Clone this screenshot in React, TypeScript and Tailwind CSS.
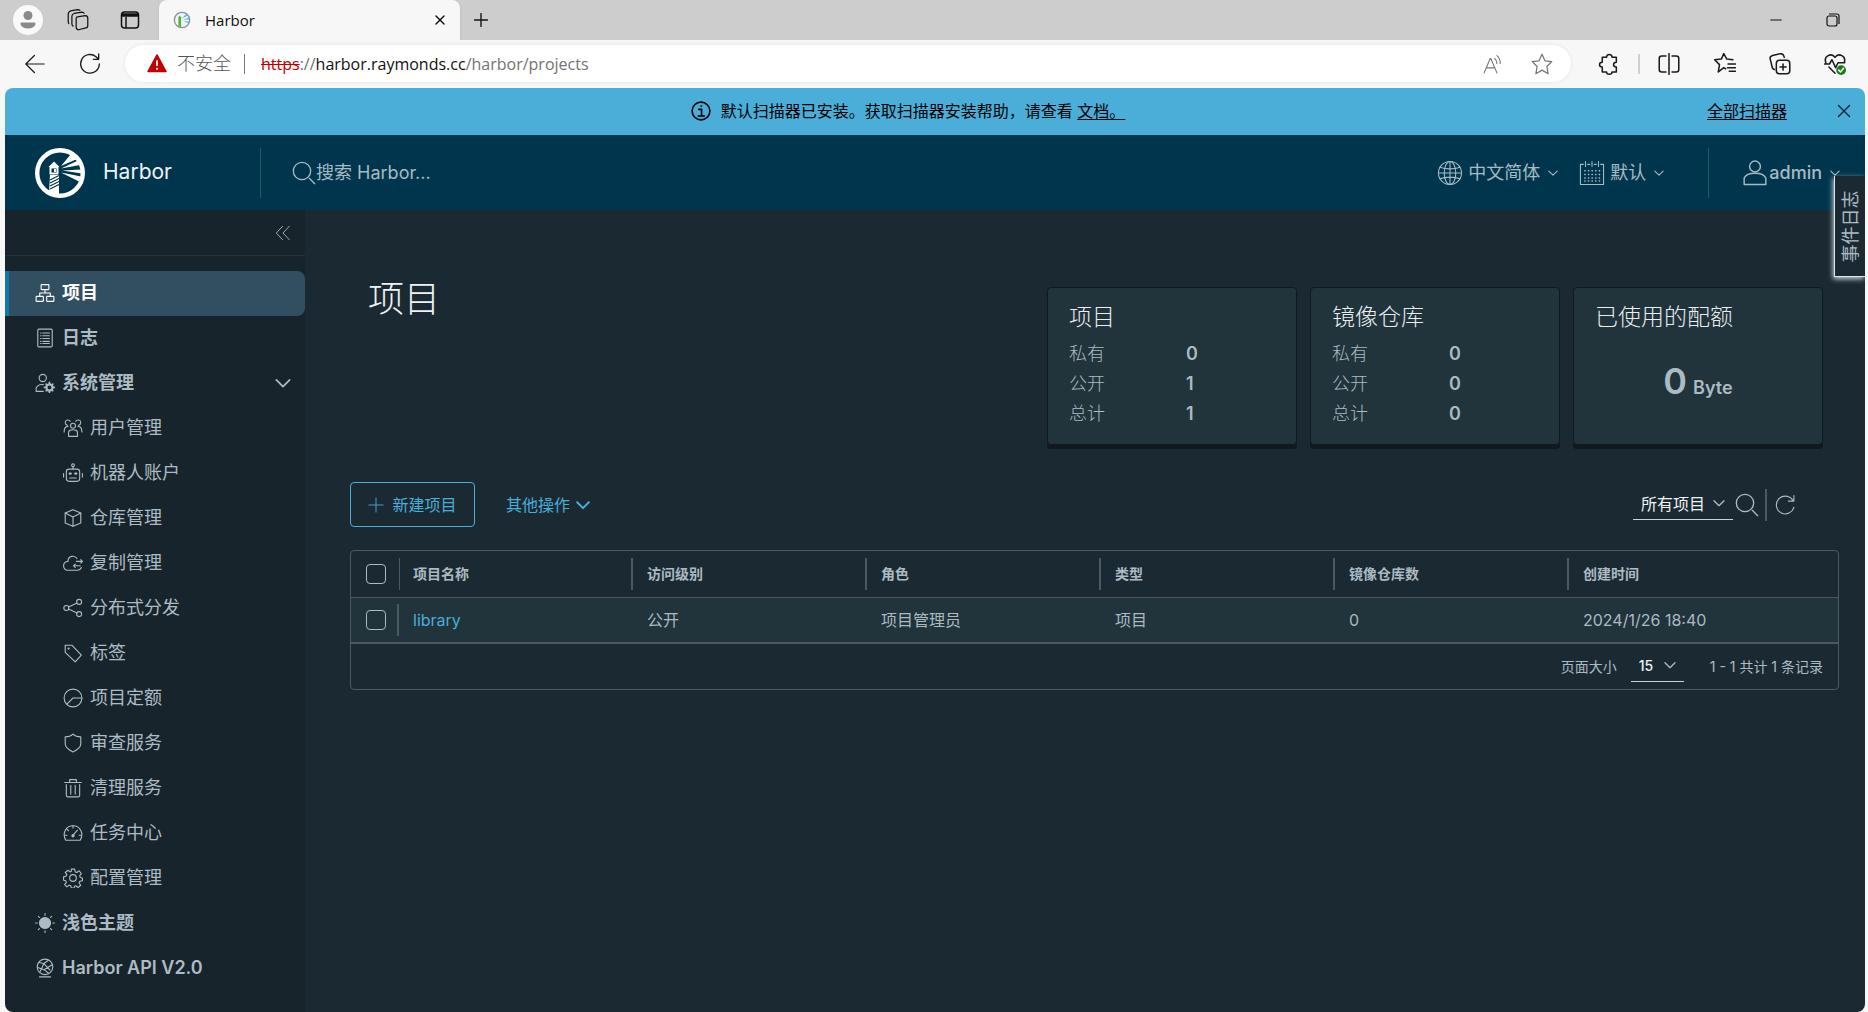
import { useState, type ReactNode } from "react";
import { Minus, Plus, X } from "lucide-react";

const cjk = "font-[Inter,'Noto_Sans_CJK_SC',sans-serif]";

function Icon({
  children,
  className = "size-5",
  width = 2,
}: {
  children: ReactNode;
  className?: string;
  width?: number;
}) {
  return (
    <svg
      viewBox="0 0 36 36"
      className={`shrink-0 ${className}`}
      fill="none"
      stroke="currentColor"
      strokeWidth={width}
      strokeLinecap="round"
      strokeLinejoin="round"
      aria-hidden="true"
    >
      {children}
    </svg>
  );
}

function Chevron({ className = "size-[14px]", width = 3 }: { className?: string; width?: number }) {
  return (
    <Icon className={className} width={width}>
      <path d="M3 11l15 15 15-15" />
    </Icon>
  );
}

function SearchIcon({ className = "size-6" }: { className?: string }) {
  return (
    <Icon className={className} width={2}>
      <circle cx="15" cy="15" r="13" />
      <path d="M26 26l8 8" />
    </Icon>
  );
}

const icons: Record<string, ReactNode> = {
  projects: (
    <>
      <rect x="11" y="3" width="14" height="9" rx="1" />
      <rect x="2" y="24" width="13" height="9" rx="1" />
      <rect x="21" y="24" width="13" height="9" rx="1" />
      <path d="M18 12v6M8.500 24v-6h19v6" />
    </>
  ),
  logs: (
    <>
      <rect x="5" y="2" width="26" height="32" rx="2" />
      <path d="M14 9h12M14 14h12M14 19h12M14 24h12M14 28h12M10 9h1M10 14h1M10 19h1M10 24h1M10 28h1" />
    </>
  ),
  admin: (
    <>
      <circle cx="14" cy="9" r="6.500" />
      <path d="M15 33H2v-6c3-5 8-7 13-6" />
      <circle cx="26" cy="26" r="5.500" strokeWidth="4" />
      <path d="M26 17v3M26 32v3M17 26h3M32 26h3M20 20l2 2M30 30l2 2M32 20l-2 2M22 30l-2 2" strokeWidth="3" />
    </>
  ),
  users: (
    <>
      <circle cx="18" cy="14" r="4.500" />
      <path d="M10 33v-8c2-5 14-5 16 0v8z" />
      <path d="M13 6c-2-4-9-3-9 2 0 2 1 4 4 5M23 6c2-4 9-3 9 2 0 2-1 4-4 5M9 15c-4 0-7 3-7 10M27 15c4 0 7 3 7 10" />
    </>
  ),
  robot: (
    <>
      <rect x="6" y="11" width="24" height="22" rx="5" />
      <circle cx="18" cy="4" r="2.500" />
      <path d="M18 7v4M1 19v6M35 19v6M12 27h12" />
      <path d="M12 19h2M22 19h2" strokeWidth="4" />
    </>
  ),
  box: (
    <>
      <path d="M18 3l14 6v18l-14 6-14-6V9z" />
      <path d="M4 9l14 7 14-7M18 16v17" />
    </>
  ),
  cloud: (
    <>
      <path d="M25 10C21 3 9 5 9 15c-5 0-8 4-8 8s3 8 7 8h18c4 0 6-2 7-5" />
      <path d="M24 15h11M32 12l3 3-3 3M31 23H19M22 20l-3 3 3 3" />
    </>
  ),
  share: (
    <>
      <circle cx="6" cy="18" r="4.500" />
      <circle cx="29" cy="7" r="4.500" />
      <circle cx="29" cy="29" r="4.500" />
      <path d="M10 16l15-7M10 20l15 7" />
    </>
  ),
  tag: (
    <>
      <path d="M4 4h12l17 18-11 12L4 17z" />
      <circle cx="10" cy="10" r="1" />
    </>
  ),
  quota: (
    <>
      <circle cx="18" cy="18" r="16" />
      <path d="M7 29l11-11h16" />
    </>
  ),
  shield: <path d="M18 2c4 4 9 5 14 5v13c0 6-7 11-14 14C11 31 4 26 4 20V7c5 0 10-1 14-5z" />,
  trash: <path d="M3 8h30M12 7V3h12v4M6 12v19c0 2 1 3 3 3h18c2 0 3-1 3-3V12M14 13v16M22 13v16" />,
  gauge: (
    <>
      <path d="M5 31C-2 19 5 5 18 5s20 14 13 26z" />
      <path d="M18 22l8-9M18 5v4M3 22h4M33 22h-4M7 11l3 3" />
      <circle cx="18" cy="23" r="2" fill="currentColor" />
    </>
  ),
  gear: (
    <>
      <path d="M15 2h6l1 5 3 1 4-3 4 5-3 4 1 3 4 1v5l-5 1-1 3 3 4-5 4-4-3-2 1-1 3h-5l-1-4-3-1-4 3-4-4 3-4-1-3-4-1v-6l4-1 2-3-3-4 5-4 4 3 2-1z" />
      <circle cx="18" cy="18" r="6" />
    </>
  ),
  sun: (
    <>
      <circle cx="18" cy="18" r="10" fill="currentColor" />
      <path d="M18 1v3M18 32v3M1 18h3M32 18h3M6 6l2 2M28 28l2 2M30 6l-2 2M6 30l2-2" />
    </>
  ),
  api: (
    <>
      <circle cx="18" cy="16" r="14" />
      <path d="M8 34h20M7 8l9 2 11 12M24 4l-8 6-7 15M31 12l-15 9-11-4M16 21l8 6" />
    </>
  ),
};

const systemItems = [
  ["users", "用户管理"],
  ["robot", "机器人账户"],
  ["box", "仓库管理"],
  ["cloud", "复制管理"],
  ["share", "分布式分发"],
  ["tag", "标签"],
  ["quota", "项目定额"],
  ["shield", "审查服务"],
  ["trash", "清理服务"],
  ["gauge", "任务中心"],
  ["gear", "配置管理"],
];

const columns = ["项目名称", "访问级别", "角色", "类型", "镜像仓库数", "创建时间"];

function TabStrip() {
  return (
    <div className="flex h-10 items-stretch bg-[#cdcdcd] text-[#111]">
      <div className="flex w-[159px] items-center pl-[13px]">
        <button aria-label="Profile" className="flex size-[30px] items-center justify-center rounded-full bg-[#f9f9f9] text-[#8a8a8a]">
          <svg viewBox="0 0 20 20" className="size-5" fill="currentColor">
            <circle cx="10" cy="5.500" r="4.500" />
            <path d="M3 12.500h14c1 0 1 6-7 6s-8-6-7-6z" />
          </svg>
        </button>
        <button aria-label="Workspaces" className="ml-6">
          <Icon className="size-[22px]">
            <path d="M17 13l13-2c3 0 4 1 4 4v12c0 3-1 4-3 4l-12 3c-3 0-4-1-4-4V16c0-2 0-3 2-3z" />
            <path d="M10 28c-2-1-2-2-2-4V12c0-3 1-4 4-5l12-2c2 0 3 0 4 2" />
            <path d="M3 24c-1-1-1-2-1-4V8c0-3 1-4 4-5l11-2c2 0 3 0 4 1" />
          </Icon>
        </button>
        <button aria-label="Tab actions" className="ml-[31px]">
          <svg viewBox="0 0 20 20" className="size-5" fill="none" stroke="currentColor" strokeWidth="1.500">
            <rect x="1.500" y="2" width="17" height="16" rx="3" />
            <path d="M2 4h16v2H2z" fill="currentColor" />
            <path d="M6 7v11" />
          </svg>
        </button>
      </div>
      <div className="flex w-[301px] items-center rounded-t-lg bg-[#f7f7f7] pr-3 pl-[14px] shadow-sm">
        <svg viewBox="0 0 20 20" className="size-[18px]" aria-hidden="true">
          <circle cx="10" cy="10" r="8.500" fill="#eef4f8" stroke="#8b9499" strokeWidth="1.500" />
          <path d="M6 7l1.500-2L9 7v11l-3-1z" fill="#59ad45" />
          <path d="M10 8l5-5 2 2zM11 9.500l7-2v2zM11 11l7 1v2z" fill="#61b0e4" />
        </svg>
        <span className="ml-[14px] flex-1 font-['Open_Sans',sans-serif] text-[15px]">Harbor</span>
        <button aria-label="Close tab">
          <X className="size-4" strokeWidth={2} />
        </button>
      </div>
      <button aria-label="New tab" className="ml-[10px]">
        <Plus className="size-[22px]" strokeWidth={1.5} />
      </button>
      <div className="ml-auto flex items-center gap-10 pr-[27px]">
        <button aria-label="Minimize">
          <Minus className="size-[18px]" strokeWidth={1.5} />
        </button>
        <button aria-label="Restore">
          <svg viewBox="0 0 16 16" className="size-4" fill="none" stroke="currentColor" strokeWidth="1.200">
            <rect x="2" y="4" width="10" height="10" rx="2" />
            <path d="M4 2h8c2 0 2 1 2 2v8" />
          </svg>
        </button>
      </div>
    </div>
  );
}

function AddressBar() {
  return (
    <div className="flex h-12 items-center bg-[#f7f7f7] pb-px text-[#1b1b1b]">
      <button aria-label="Back" className="ml-6">
        <Icon className="size-[22px]">
          <path d="M33 18H3M17 4L3 18l14 14" />
        </Icon>
      </button>
      <button aria-label="Refresh" className="ml-8">
        <Icon className="size-6">
          <path d="M32 18a14 14 0 1 1-5-11l4 4M31 3v8h-8" />
        </Icon>
      </button>
      <div className="ml-[23px] flex h-[37px] flex-1 items-center rounded-full bg-white pr-[18px] pl-[21px] shadow-[0_0_4px_rgba(0,0,0,0.08)]">
        <svg viewBox="0 0 22 20" className="h-[19px] w-[22px]" aria-hidden="true">
          <path d="M11 1l9.500 17.500h-19z" fill="#c00000" stroke="#c00000" strokeWidth="1.500" strokeLinejoin="round" />
          <path d="M11 6.500v6M11 14.500v2" stroke="#fff" strokeWidth="1.800" />
        </svg>
        <span className="ml-[9px] font-['Open_Sans','Noto_Sans_CJK_SC',sans-serif] text-[18px] font-light text-[#555]">不安全</span>
        <span className="ml-[13px] h-5 w-px bg-[#777]" />
        <span className="ml-4 font-['Open_Sans',sans-serif] text-base text-[#737373]">
          <span className="text-[#c00000] line-through">https</span>://
          <span className="text-[#111]">harbor.raymonds.cc</span>/harbor/projects
        </span>
        <button aria-label="Read aloud" className="ml-auto text-[#767676]">
          <Icon className="size-5">
            <path d="M2 34L13 8h1l11 26M6 25h15M21 8c3 2 4 5 4 9M25 3c5 4 6 8 6 14" />
          </Icon>
        </button>
        <button aria-label="Favorite" className="ml-7 text-[#767676]">
          <Icon className="size-[22px]">
            <path d="M18 2l5 11 11 1-8 8 2 12-10-6-10 6 2-12-8-8 11-1z" />
          </Icon>
        </button>
      </div>
      <div className="flex items-center pr-[22px] pl-[27px]">
        <button aria-label="Extensions">
          <Icon className="size-[22px]" width={2.5}>
            <path d="M7 7h7c0-6 9-6 9 0h7v8c-6 0-6 8 0 8v8h-7c0 5-9 5-9 0H7v-8c-6 0-6-8 0-8z" />
          </Icon>
        </button>
        <span className="mx-[18px] h-5 w-[2px] bg-[#cfcfcf]" />
        <button aria-label="Split screen">
          <Icon className="size-[22px]" width={2.5}>
            <path d="M13 5H6c-3 0-4 1-4 4v18c0 3 1 4 4 4h7M23 5h7c3 0 4 1 4 4v18c0 3-1 4-4 4h-7M18 1v34" />
          </Icon>
        </button>
        <button aria-label="Favorites" className="ml-[34px]">
          <Icon className="size-[22px]" width={2.5}>
            <path d="M19 26l-3-2-9 7 2-12-8-8 11-1 4-9 5 9 10 1M23 18h12M22 24h13M25 30h10" />
          </Icon>
        </button>
        <button aria-label="Collections" className="ml-[33px]">
          <Icon className="size-[22px]" width={2.5}>
            <rect x="12" y="12" width="22" height="22" rx="5" />
            <path d="M23 18v10M18 23h10M9 27c-3-1-4-3-4-5L2 10c-1-3 1-5 4-6l13-3c3 0 5 1 6 6" />
          </Icon>
        </button>
        <button aria-label="Performance" className="ml-[33px]">
          <Icon className="size-[22px]" width={2.5}>
            <path d="M3 16C-1 5 12-1 18 7c6-8 19-2 15 9M1 18h8l4-7 6 13 4-8h11M8 23l10 10" />
            <circle cx="28" cy="28" r="8" fill="#187b1c" stroke="none" />
            <path d="M24 28l3 3 5-6" stroke="#fff" />
          </Icon>
        </button>
      </div>
    </div>
  );
}

function Banner() {
  return (
    <div className="flex h-[47px] items-center bg-[#4aaed9] pr-[10px] pb-[2px] text-base text-black">
      <div className="flex flex-1 items-center justify-center pl-[104px]">
        <Icon className="size-5" width={3}>
          <circle cx="18" cy="18" r="16" />
          <path d="M14 15h5v12M13 27h11M18 9h1" />
        </Icon>
        <span className="ml-[10px] whitespace-pre">
          默认扫描器已安装。获取扫描器安装帮助，请查看 <a href="#docs" className="underline underline-offset-2">文档。</a>
        </span>
      </div>
      <a href="#scanners" className="underline underline-offset-2">全部扫描器</a>
      <button aria-label="Close banner" className="ml-[46px] text-[#123]">
        <X className="size-[22px]" strokeWidth={1.5} />
      </button>
    </div>
  );
}

function Logo() {
  return (
    <svg viewBox="0 0 50 50" className="size-[50px] shrink-0" aria-hidden="true">
      <circle cx="25" cy="25" r="22.800" fill="none" stroke="#fff" strokeWidth="4.400" />
      <path d="M13.500 19l5.500-5.500 5.500 5.500z" fill="#fff" />
      <path d="M15.500 19.500h7v6h-7z" fill="none" stroke="#fff" strokeWidth="2" />
      <path d="M19 21h2v3h-2z" fill="#fff" />
      <path d="M15 27h9v20l-10-2z" fill="#fff" />
      <path d="M15 32l9-4.500M15 35l9-4.500M15 38l9-4.500M15 41l9-4.500" stroke="#00364d" strokeWidth="1.100" />
      <path d="M26 18L36 6l6 5zM26 20.500l16-7.500 3 4zM27 22.500l20-1v4zM26 24.500l20 4-2 5z" fill="#fff" />
    </svg>
  );
}

function Header() {
  return (
    <header className="flex h-[75px] items-center bg-[#00364d] text-[18px] text-[#a6bac4]">
      <a href="#home" className="flex w-[255px] items-center pl-[30px] text-[#eef3f5]">
        <Logo />
        <span className="ml-[18px] pb-[2px] text-[21px]">Harbor</span>
      </a>
      <div className="flex h-[50px] flex-1 items-center border-l border-[#28566a] pl-[31px]">
        <label htmlFor="search" aria-label="搜索">
          <SearchIcon />
        </label>
        <input
          id="search"
          placeholder="搜索 Harbor..."
          className="w-[300px] bg-transparent outline-none placeholder:text-[#a6bac4]"
        />
      </div>
      <button className="flex items-center">
        <Icon className="size-[26px]" width={1.5}>
          <circle cx="18" cy="18" r="16" />
          <ellipse cx="18" cy="18" rx="8" ry="16" />
          <path d="M18 2v32M2 18h32M4 10c8 3 20 3 28 0M4 26c8-3 20-3 28 0" />
        </Icon>
        <span className="ml-[5px] pb-px">中文简体</span>
        <Chevron className="ml-2 size-[10px]" width={4} />
      </button>
      <button className="ml-[21px] flex items-center">
        <Icon className="size-[26px]" width={1.5}>
          <path d="M6 6H2v28h32V6h-4M12 6h3M21 6h3M9 2v7M18 2v7M27 2v7" />
          <path d="M8 15h21M8 20h21M8 25h21M8 29h21" strokeWidth="2" strokeDasharray="0.500 4.500" />
        </Icon>
        <span className="ml-[5px] pb-px">默认</span>
        <Chevron className="ml-2 size-[10px]" width={4} />
      </button>
      <div className="ml-11 flex h-[50px] items-center border-l border-[#28566a] pr-[25px] pl-[33px]">
        <button className="flex items-center font-medium">
          <Icon className="size-[26px]" width={2}>
            <circle cx="18" cy="9" r="7.500" />
            <path d="M3 34v-9c4-9 26-9 30 0v9z" />
          </Icon>
          <span className="ml-px pb-px">admin</span>
          <Chevron className="ml-2 size-[10px]" width={4} />
        </button>
      </div>
    </header>
  );
}

function NavLink({ icon, label, active, sub }: { icon: string; label: string; active?: boolean; sub?: boolean }) {
  return (
    <a
      href={`#${icon}`}
      className={`flex h-[45px] items-center gap-[7px] border-l-4 pb-[2px] text-[18px] ${
        sub ? "pl-[54px]" : "pl-[26px] font-semibold"
      } ${active ? "rounded-r-lg border-[#0f79ad] bg-[#324f62] text-white" : "border-transparent"}`}
    >
      <Icon className="size-5">{icons[icon]}</Icon>
      <span>{label}</span>
    </a>
  );
}

function Sidebar() {
  const [open, setOpen] = useState(true);

  return (
    <aside className="w-[300px] shrink-0 bg-[#17242b] text-[#adbbc4]">
      <div className="flex h-[46px] items-center justify-end border-b border-[#22343c] pr-[14px]">
        <button aria-label="Collapse">
          <Icon className="size-4">
            <path d="M17 3L3 18l14 15M32 3L18 18l14 15" />
          </Icon>
        </button>
      </div>
      <nav className="pt-[15px]">
        <NavLink icon="projects" label="项目" active />
        <NavLink icon="logs" label="日志" />
        <button
          onClick={() => setOpen(!open)}
          aria-expanded={open}
          className="flex h-[45px] w-full items-center gap-[7px] pr-[14px] pb-[2px] pl-[30px] text-[18px] font-semibold"
        >
          <Icon className="size-5">{icons.admin}</Icon>
          <span className="flex-1 text-left">系统管理</span>
          <Chevron className="size-4" width={4} />
        </button>
        {open && systemItems.map(([icon, label]) => <NavLink key={icon} icon={icon} label={label} sub />)}
        <NavLink icon="sun" label="浅色主题" />
        <NavLink icon="api" label="Harbor API V2.0" />
      </nav>
    </aside>
  );
}

function Card({ title, children }: { title: string; children: ReactNode }) {
  return (
    <section className="h-[158px] w-[250px] rounded border border-[#0f1a20] bg-[#21333b] px-[21px] pt-[13px] shadow-[0_4px_0_#0f191e]">
      <h2 className="text-[23px] leading-8 font-light text-[#e9eef1]">{title}</h2>
      {children}
    </section>
  );
}

function Stats({ values }: { values: number[] }) {
  return (
    <dl className="mt-[6px] text-[18px] leading-[30px]">
      {["私有", "公开", "总计"].map((label, i) => (
        <div key={label} className="flex">
          <dt className="w-[117px] font-light">{label}</dt>
          <dd className="font-semibold">{values[i]}</dd>
        </div>
      ))}
    </dl>
  );
}

function Checkbox({ label }: { label: string }) {
  return (
    <input
      type="checkbox"
      aria-label={label}
      className="block size-5 appearance-none rounded-[4px] border border-[#acbac3] checked:bg-[#4aaed9]"
    />
  );
}

function ProjectTable() {
  return (
    <div className="mt-[23px] rounded border border-[#495a64]">
      <table className="w-full table-fixed text-left">
        <colgroup>
          <col className="w-12" />
          <col className="w-[232px]" />
          {columns.slice(2).map((c) => (
            <col key={c} className="w-[234px]" />
          ))}
          <col />
        </colgroup>
        <thead>
          <tr className="h-[46px] border-b border-[#495a64] text-sm">
            <th className="p-0 pl-[15px]">
              <Checkbox label="全选" />
            </th>
            {columns.map((c, i) => (
              <th key={c} className="p-0 font-semibold">
                <div className={`flex h-8 items-center border-[#495a64] ${i === 0 ? "border-l pl-[13px]" : "border-l-2 pl-[14px]"}`}>{c}</div>
              </th>
            ))}
          </tr>
        </thead>
        <tbody>
          <tr className="h-[46px] border-b-2 border-[#495a64] bg-[#21333b] text-base">
            <td className="p-0 pl-[15px]">
              <div className="flex h-8 items-center border-r-2 border-[#495a64]">
                <Checkbox label="library" />
              </div>
            </td>
            <td className="p-0 pl-[14px]">
              <a href="#library" className="text-[#4aaed9]">library</a>
            </td>
            <td className="p-0 pl-4">公开</td>
            <td className="p-0 pl-4">项目管理员</td>
            <td className="p-0 pl-4">项目</td>
            <td className="p-0 pl-4">0</td>
            <td className="p-0 pl-4">2024/1/26 18:40</td>
          </tr>
        </tbody>
      </table>
      <div className="flex h-[45px] items-center justify-end pr-[15px] text-sm">
        <label htmlFor="page-size">页面大小</label>
        <div className="relative ml-[14px] w-[53px] border-b border-[#c9d2d8]">
          <select id="page-size" className="h-[30px] w-full appearance-none bg-transparent pl-2 font-medium text-[#eef2f4]">
            <option>15</option>
          </select>
          <Chevron className="pointer-events-none absolute top-2 right-2 size-3" width={4} />
        </div>
        <span className="ml-[26px]">1 - 1 共计 1 条记录</span>
      </div>
    </div>
  );
}

function Projects() {
  return (
    <main className="min-w-0 flex-1 bg-[#1b2a32] pr-[26px] pl-[45px] text-[#acbac3]">
      <div className="flex justify-between pt-[77px] pr-4">
        <h1 className="pl-[18px] text-[36px] leading-6 font-light text-[#eef2f4]">项目</h1>
        <div className="flex gap-[13px]">
          <Card title="项目">
            <Stats values={[0, 1, 1]} />
          </Card>
          <Card title="镜像仓库">
            <Stats values={[0, 0, 0]} />
          </Card>
          <Card title="已使用的配额">
            <p className="mt-7 flex items-baseline justify-center gap-[6px] leading-10 font-semibold">
              <span className="text-4xl">0</span>
              <span className="text-[18px]">Byte</span>
            </p>
          </Card>
        </div>
      </div>

      <div className="mt-[37px] flex h-[45px] items-center text-base text-[#4aaed9]">
        <button className="flex h-full w-[125px] items-center justify-center gap-2 rounded border border-[#4aaed9]">
          <Icon className="size-4">
            <path d="M18 2v32M2 18h32" />
          </Icon>
          新建项目
        </button>
        <button className="ml-[31px] flex items-center gap-[6px]">
          其他操作
          <Chevron className="size-[14px]" width={5} />
        </button>
        <div className="ml-auto flex items-center pr-11 text-[#acbac3]">
          <div className="relative w-[100px] border-b border-[#c9d2d8]">
            <select aria-label="项目类型" className="h-[30px] w-full appearance-none bg-transparent pl-2 text-[#eef2f4]">
              <option>所有项目</option>
            </select>
            <Chevron className="pointer-events-none absolute top-2 right-2 size-3" width={4} />
          </div>
          <button aria-label="搜索" className="ml-[2px]">
            <SearchIcon />
          </button>
          <span className="ml-[6px] h-8 w-[2px] bg-[#495a64]" />
          <button aria-label="刷新" className="ml-2">
            <Icon className="size-5">
              <path d="M34 22a16 16 0 1 1-3-14l3 3M34 1v10h-10" />
            </Icon>
          </button>
        </div>
      </div>

      <ProjectTable />
    </main>
  );
}

export default function App() {
  return (
    <div className={`flex min-h-screen flex-col bg-[#f7f7f7] ${cjk}`}>
      <TabStrip />
      <AddressBar />
      <div className="relative mr-[3px] ml-[5px] flex flex-1 flex-col overflow-hidden rounded-lg">
        <Banner />
        <Header />
        <div className="flex flex-1">
          <Sidebar />
          <Projects />
        </div>
        <button className="absolute top-[88px] right-0 flex h-[101px] w-[31px] items-center justify-center border-b border-l border-[#dfe5e8] bg-[#1b2a32] text-[18px] text-[#acbac3] shadow-[-1px_2px_5px_#c9d2d8]">
          <span className="-rotate-90 whitespace-nowrap">事件日志</span>
        </button>
      </div>
    </div>
  );
}
